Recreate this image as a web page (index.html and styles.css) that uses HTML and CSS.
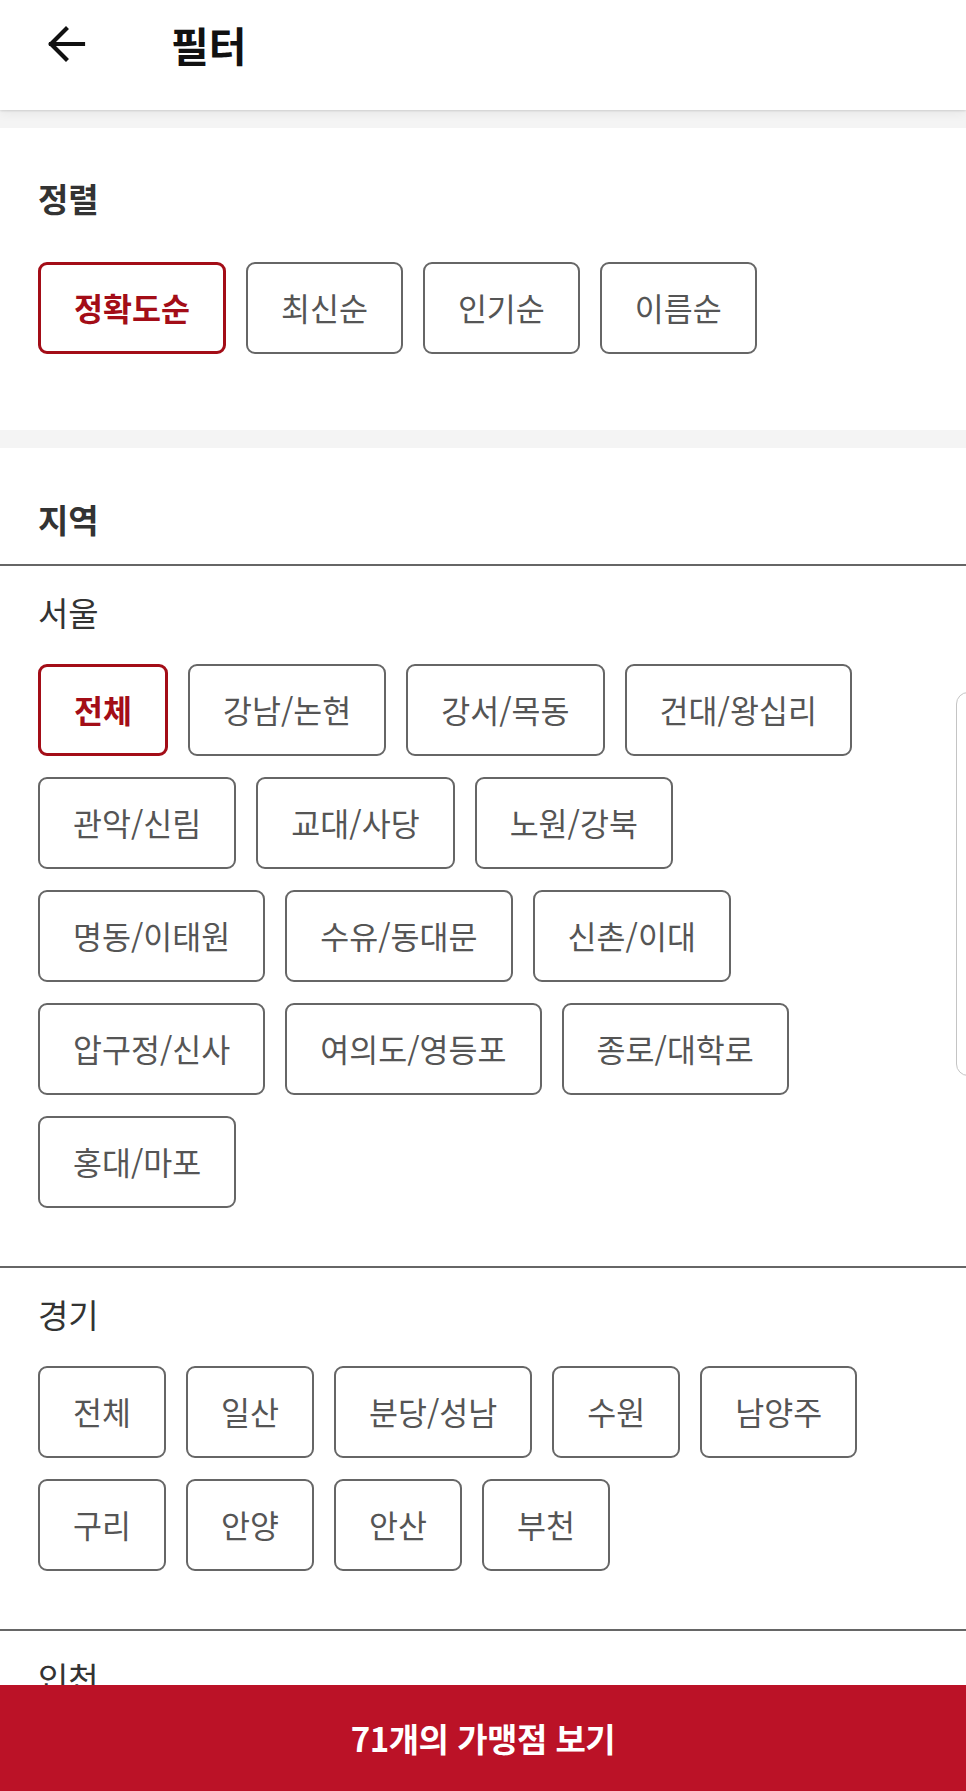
FILE: index.html
```html
<!DOCTYPE html>
<html lang="ko">
<head>
<meta charset="utf-8">
<title>필터</title>
<link rel="stylesheet" href="styles.css">
</head>
<body>
<header class="appbar">
  <button class="back" aria-label="뒤로">
    <svg viewBox="0 0 40 40" width="40" height="40"><path d="M37 20H5M20 5L5 20l15 15" fill="none" stroke="#111" stroke-width="4.2" stroke-linecap="square"/></svg>
  </button>
  <h1 class="title">필터</h1>
</header>
<main class="content">
  <section class="card sort">
    <h2 class="card-title">정렬</h2>
    <div class="chips">
      <button class="chip active">정확도순</button>
      <button class="chip">최신순</button>
      <button class="chip">인기순</button>
      <button class="chip">이름순</button>
    </div>
  </section>
  <section class="card region">
    <h2 class="card-title region-title">지역</h2>
    <div class="group">
      <h3 class="group-label">서울</h3>
      <div class="chips">
        <button class="chip active">전체</button>
        <button class="chip">강남/논현</button>
        <button class="chip">강서/목동</button>
        <button class="chip">건대/왕십리</button>
        <button class="chip">관악/신림</button>
        <button class="chip">교대/사당</button>
        <button class="chip">노원/강북</button>
        <button class="chip">명동/이태원</button>
        <button class="chip">수유/동대문</button>
        <button class="chip">신촌/이대</button>
        <button class="chip">압구정/신사</button>
        <button class="chip">여의도/영등포</button>
        <button class="chip">종로/대학로</button>
        <button class="chip">홍대/마포</button>
      </div>
    </div>
    <div class="group">
      <h3 class="group-label">경기</h3>
      <div class="chips">
        <button class="chip">전체</button>
        <button class="chip">일산</button>
        <button class="chip">분당/성남</button>
        <button class="chip">수원</button>
        <button class="chip">남양주</button>
        <button class="chip">구리</button>
        <button class="chip">안양</button>
        <button class="chip">안산</button>
        <button class="chip">부천</button>
      </div>
    </div>
    <div class="group">
      <h3 class="group-label">인천</h3>
      <div class="chips">
        <button class="chip">전체</button>
      </div>
    </div>
  </section>
</main>
<div class="scroller"></div>
<button class="cta">71개의 가맹점 보기</button>
</body>
</html>
```

FILE: styles.css
```css
* { box-sizing: border-box; }
html, body { margin: 0; padding: 0; }
body {
  background: #f4f4f4;
  font-family: "Noto Sans CJK KR", "Noto Sans", sans-serif;
  color: #333;
  width: 966px;
  height: 1791px;
  overflow: hidden;
  position: relative;
}
.appbar {
  height: 110px;
  background: #fff;
  display: flex;
  align-items: flex-start;
  padding-top: 24px;
  position: relative;
  z-index: 2;
  box-shadow: 0 1px 2px rgba(0,0,0,0.12), 0 4px 10px rgba(0,0,0,0.05);
}
.back {
  border: 0;
  background: none;
  padding: 0;
  margin-left: 46px;
  width: 40px;
  height: 40px;
  display: flex;
}
.title {
  margin: 0 0 0 85px;
  font-size: 41px;
  font-weight: 700;
  color: #111;
  line-height: 44px;
  margin-top: -2px;
}
.content {
  padding-top: 18px;
}
.card {
  background: #fff;
}
.sort {
  padding: 50px 38px 76px;
  margin-bottom: 18px;
}
.card-title {
  margin: 0;
  font-size: 33px;
  line-height: 40px;
  font-weight: 700;
  color: #333;
}
.sort .card-title { margin-bottom: 44px; }
.region { padding-top: 51px; }
.region-title {
  padding: 0 38px 25px;
}
.group {
  border-top: 2px solid #666;
  padding: 26px 38px 58px;
}
.group-label {
  margin: 0 0 32px;
  font-size: 33px;
  line-height: 40px;
  font-weight: 400;
  color: #333;
}
.chips {
  display: flex;
  flex-wrap: wrap;
  gap: 21px 20px;
  width: 864px;
}
.chip {
  height: 92px;
  padding: 0 33px;
  border: 2px solid #666;
  border-radius: 9px;
  background: #fff;
  font-family: inherit;
  font-size: 31.5px;
  line-height: 1;
  color: #555;
  font-weight: 400;
}
.chip.active {
  border: 3.5px solid #a30d17;
  color: #a30d17;
  font-weight: 700;
}
.scroller {
  position: absolute;
  left: 956px;
  top: 692px;
  width: 30px;
  height: 384px;
  border: 1.5px solid #c4c4c4;
  border-radius: 12px;
  background: #fff;
}
.cta {
  position: absolute;
  left: 0;
  bottom: 0;
  width: 966px;
  height: 106px;
  border: 0;
  background: #bb1227;
  color: #fff;
  font-family: inherit;
  font-size: 33px;
  font-weight: 700;
  letter-spacing: -0.5px;
  z-index: 3;
}
```
